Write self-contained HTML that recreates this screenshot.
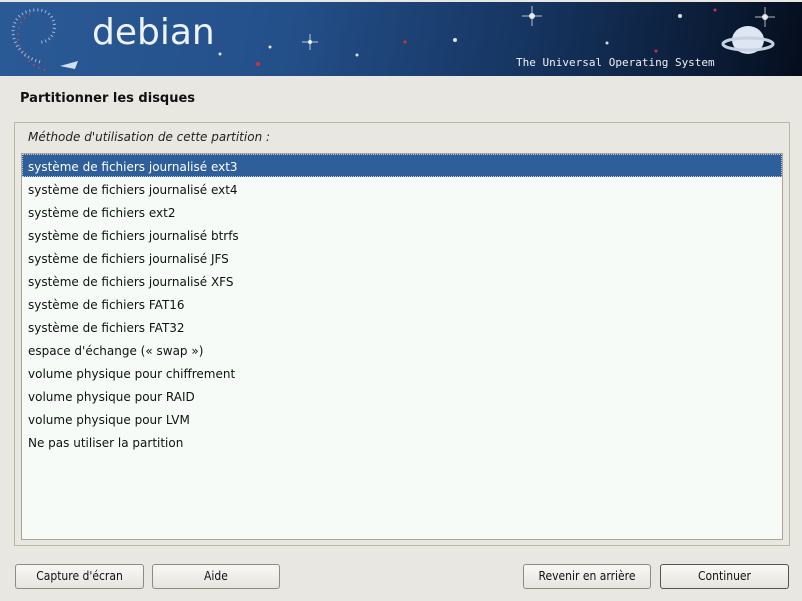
<!DOCTYPE html>
<html><head><meta charset="utf-8"><style>
*{margin:0;padding:0;box-sizing:border-box}
body{width:802px;height:601px;background:#e8e7e1;font-family:"DejaVu Sans","Liberation Sans",sans-serif;font-size:12px;color:#111;position:relative;overflow:hidden}
.hdr{position:absolute;left:0;top:2px;width:802px;height:74px;background:linear-gradient(100deg,#2a5a96 0%,#24508a 35%,#163562 65%,#0a1a33 90%,#050d1c 100%)}
.logo{position:absolute;left:92px;top:10px;font-size:36px;color:#eef4fb;font-family:"DejaVu Sans",sans-serif;letter-spacing:0px}
.tag{position:absolute;left:516px;top:54px;font-family:"DejaVu Sans Mono","Liberation Mono",monospace;font-size:11px;color:#f0f0f0}
.title{position:absolute;left:20px;top:91px;font-weight:bold;font-size:13px}
.frame{position:absolute;left:14px;top:122px;width:776px;height:424px;border:1px solid #bdb6a2}
.lbl{position:absolute;left:28px;top:130px;font-style:italic;font-size:12px;color:#222}
.list{position:absolute;left:21px;top:153px;width:762px;height:387px;border:1px solid #a9a496;background:#f7fbf8}
.row{height:23px;line-height:23px;padding-left:6px;padding-top:2px;font-size:12px}
.sel{background:#2f5f9a;color:#fff;outline:1px dotted #bcd;outline-offset:-1px}
.btn{position:absolute;top:564px;height:25px;border:1px solid #8e8b82;border-radius:3px;background:linear-gradient(#f8f8f6,#e6e4de);text-align:center;line-height:23px;font-family:"DejaVu Sans Condensed","DejaVu Sans",sans-serif;font-stretch:condensed;font-size:12px}
</style></head><body>
<div class="hdr">
<svg width="802" height="74" style="position:absolute;left:0;top:0">
<path d="M40 60 C5 50 5 10 35 8 C60 6 60 40 40 40" fill="none" stroke="#c8d0e0" stroke-width="3" stroke-dasharray="1 3" opacity=".8"/>
<path d="M45 68 C15 60 10 20 30 12" fill="none" stroke="#e04050" stroke-width="2" stroke-dasharray="1 5"/>
<path d="M60 64 l18 -5 l-3 8z" fill="#cfe0f0"/>
<g fill="#fff" opacity=".85">
<circle cx="310" cy="40" r="2"/><circle cx="532" cy="14" r="3"/><circle cx="455" cy="38" r="2"/><circle cx="680" cy="14" r="2"/><circle cx="765" cy="15" r="3"/><circle cx="270" cy="45" r="1.5"/><circle cx="220" cy="52" r="1.5"/><circle cx="357" cy="53" r="1.5"/><circle cx="607" cy="41" r="1.5"/>
</g>
<g stroke="#fff" stroke-width="1" opacity=".7"><path d="M532 4v20M522 14h20M310 32v16M302 40h16M765 5v20M755 15h20"/></g>
<g fill="#d03040"><circle cx="258" cy="62" r="2"/><circle cx="405" cy="40" r="1.5"/><circle cx="656" cy="49" r="1.5"/><circle cx="715" cy="8" r="1.5"/></g>
<ellipse cx="748" cy="38" rx="16" ry="14" fill="#dde6f2"/>
<ellipse cx="748" cy="42" rx="25" ry="6" fill="none" stroke="#c6d2e2" stroke-width="3"/>
</svg>
<div class="logo">debian</div>
<div class="tag">The Universal Operating System</div>
</div>
<div class="title">Partitionner les disques</div>
<div class="frame"></div>
<div class="lbl">Méthode d'utilisation de cette partition :</div>
<div class="list">
<div class="row sel">système de fichiers journalisé ext3</div>
<div class="row">système de fichiers journalisé ext4</div>
<div class="row">système de fichiers ext2</div>
<div class="row">système de fichiers journalisé btrfs</div>
<div class="row">système de fichiers journalisé JFS</div>
<div class="row">système de fichiers journalisé XFS</div>
<div class="row">système de fichiers FAT16</div>
<div class="row">système de fichiers FAT32</div>
<div class="row">espace d'échange (« swap »)</div>
<div class="row">volume physique pour chiffrement</div>
<div class="row">volume physique pour RAID</div>
<div class="row">volume physique pour LVM</div>
<div class="row">Ne pas utiliser la partition</div>
</div>
<div class="btn" style="left:15px;width:129px">Capture d'écran</div>
<div class="btn" style="left:152px;width:128px">Aide</div>
<div class="btn" style="left:523px;width:128px">Revenir en arrière</div>
<div class="btn" style="left:660px;width:129px;border-color:#55534e">Continuer</div>
</body></html>
